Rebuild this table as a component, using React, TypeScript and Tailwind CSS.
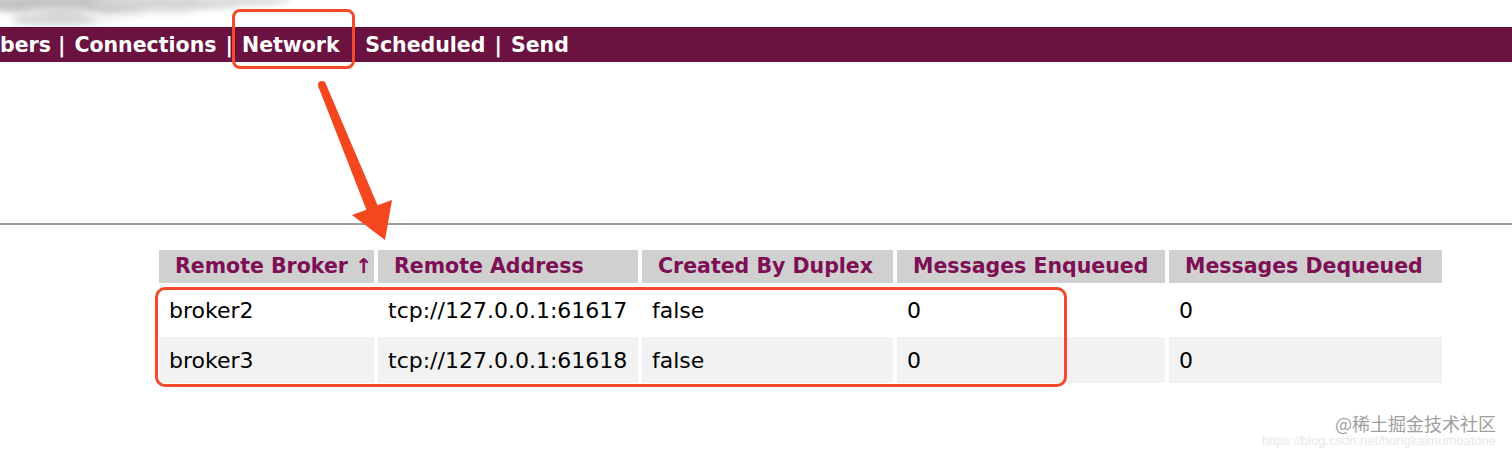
import React from "react";

const headers = [
  { t: "Remote Broker ↑", w: "w-[215px]" },
  { t: "Remote Address", w: "w-[260px]" },
  { t: "Created By Duplex", w: "w-[251px]" },
  { t: "Messages Enqueued", w: "w-[268px]" },
  { t: "Messages Dequeued", w: "w-[273px]" },
];

const rows = [
  ["broker2", "tcp://127.0.0.1:61617", "false", "0", "0"],
  ["broker3", "tcp://127.0.0.1:61618", "false", "0", "0"],
];

const navItems = ["bers", "Connections", "Network", "Scheduled", "Send"];

export default function App() {
  return (
    <div className="relative w-[1512px] h-[450px] overflow-hidden bg-white font-['DejaVu_Sans',Verdana,sans-serif]">
      {/* top blurred banner image fragment */}
      <div className="h-[27px] relative">
        <svg width="320" height="27" className="absolute left-0 top-0">
          <defs>
            <filter id="b" x="-20%" y="-50%" width="140%" height="200%">
              <feGaussianBlur stdDeviation="3" />
            </filter>
          </defs>
          <g filter="url(#b)">
            <ellipse cx="70" cy="4" rx="100" ry="10" fill="#c4c4c4" />
            <ellipse cx="170" cy="3" rx="80" ry="7" fill="#d4d4d4" />
            <ellipse cx="55" cy="20" rx="45" ry="6" fill="#d8d8d8" />
            <ellipse cx="240" cy="1" rx="50" ry="5" fill="#dddddd" />
            <path d="M20 14 Q60 4 110 16" stroke="#ededed" strokeWidth="3" fill="none" />
            <path d="M100 22 Q140 10 190 12" stroke="#e9e9e9" strokeWidth="3" fill="none" />
          </g>
        </svg>
      </div>

      {/* nav bar */}
      <div className="h-[35px] bg-[#6b1240] border-t border-[#5a0e35] flex items-center gap-[9px] text-white font-bold text-[20.5px] whitespace-nowrap">
        {navItems.map((n, i) => (
          <React.Fragment key={n}>
            {i > 0 && <span className={i === 3 ? "invisible" : i === 1 ? "ml-[-2px]" : ""}>|</span>}
            <span>{n}</span>
          </React.Fragment>
        ))}
      </div>

      {/* spacer then hr */}
      <div className="h-[161px]" />
      <div className="h-[2px] bg-[#9a9a9a]" />

      {/* table */}
      <div className="pt-[21px] pl-[155px] flex">
        <table className="border-separate border-spacing-[4px]">
          <thead>
            <tr>
              {headers.map((h) => (
                <th
                  key={h.t}
                  className={`${h.w} h-[33px] bg-[#d0d0d0] text-left pl-[16px] font-bold text-[20.5px] text-[#7d0f55] whitespace-nowrap`}
                >
                  {h.t}
                </th>
              ))}
            </tr>
          </thead>
          <tbody>
            {rows.map((r, i) => (
              <tr key={i}>
                {r.map((c, j) => (
                  <td
                    key={j}
                    className={`h-[46px] pl-[10px] text-[22px] text-black whitespace-nowrap ${i === 1 ? "bg-[#f2f2f2]" : "bg-white"}`}
                  >
                    {c}
                  </td>
                ))}
              </tr>
            ))}
          </tbody>
        </table>
      </div>

      {/* annotation overlays */}
      <div className="absolute left-[232px] top-[9px] w-[123px] h-[60px] border-[3px] border-[#f24a2b] rounded-[8px]" />
      <div className="absolute left-[155px] top-[287px] w-[912px] h-[100px] border-[3px] border-[#f24a2b] rounded-[10px]" />
      <svg className="absolute left-0 top-0" width="500" height="260">
        <circle cx="322" cy="85" r="4" fill="#f4471f" />
        <polygon
          points="318.3,86.5 366.4,209.8 352,215 385,240 392,200 377.6,205.2 325.7,83.5"
          fill="#f4471f"
        />
      </svg>

      {/* watermark */}
      <div className="absolute right-[16px] top-[414px] leading-none text-[18px] text-[#a0a0a0] font-['Noto_Sans_CJK_SC',sans-serif]">
        @稀土掘金技术社区
      </div>
      <div className="absolute right-[16px] top-[434px] leading-none text-[13px] text-[#e8e8e8] font-['Liberation_Sans',sans-serif]">
        https://blog.csdn.net/hongkaimumbatone
      </div>
    </div>
  );
}
